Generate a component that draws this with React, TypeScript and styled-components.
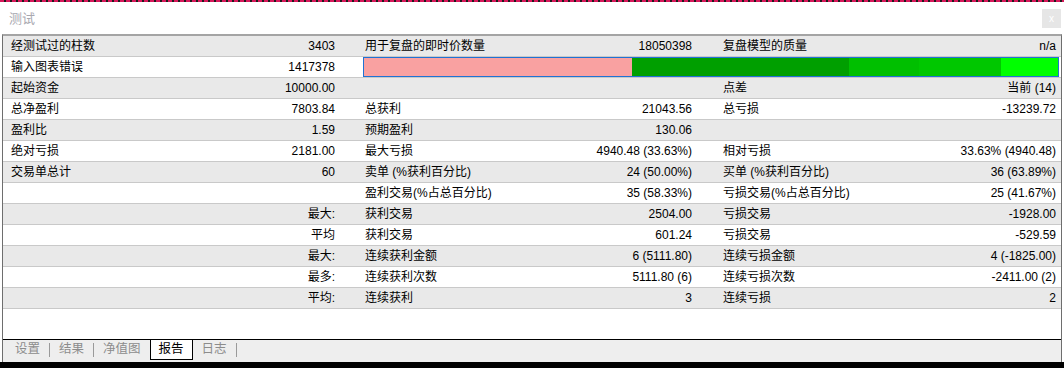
import React from 'react';
import styled, { createGlobalStyle } from 'styled-components';

type RowData = [string, string, string, string, string, string];

const rows: RowData[] = [
    ['经测试过的柱数', '3403', '用于复盘的即时价数量', '18050398', '复盘模型的质量', 'n/a'],
    ['输入图表错误', '1417378', '', '', '', ''],
    ['起始资金', '10000.00', '', '', '点差', '当前 (14)'],
    ['总净盈利', '7803.84', '总获利', '21043.56', '总亏损', '-13239.72'],
    ['盈利比', '1.59', '预期盈利', '130.06', '', ''],
    ['绝对亏损', '2181.00', '最大亏损', '4940.48 (33.63%)', '相对亏损', '33.63% (4940.48)'],
    ['交易单总计', '60', '卖单 (%获利百分比)', '24 (50.00%)', '买单 (%获利百分比)', '36 (63.89%)'],
    ['', '', '盈利交易(%占总百分比)', '35 (58.33%)', '亏损交易(%占总百分比)', '25 (41.67%)'],
    ['', '最大:', '获利交易', '2504.00', '亏损交易', '-1928.00'],
    ['', '平均', '获利交易', '601.24', '亏损交易', '-529.59'],
    ['', '最大:', '连续获利金额', '6 (5111.80)', '连续亏损金额', '4 (-1825.00)'],
    ['', '最多:', '连续获利次数', '5111.80 (6)', '连续亏损次数', '-2411.00 (2)'],
    ['', '平均:', '连续获利', '3', '连续亏损', '2'],
];

// quality bar segments, widths in px of the original bar
const quality = [
    { color: '#f9a1a1', size: 268 },
    { color: '#009f00', size: 216 },
    { color: '#00bf00', size: 70 },
    { color: '#00c700', size: 82 },
    { color: '#00ff00', size: 57 },
];

const tabs = ['设置', '结果', '净值图', '报告', '日志'];
const activeTab = 3;

const App = () => {
    return (
        <>
            <GlobalStyle />
            <Window>
                <TopStrip />
                <TitleBar>
                    <TitleText>测试</TitleText>
                    <CloseButton>x</CloseButton>
                </TitleBar>
                <Panel>
                    <Table>
                        {rows.map((r, i) => (
                            <Row key={i} $shaded={i % 2 === 0}>
                                <Label>{r[0]}</Label>
                                <Value>{r[1]}</Value>
                                <span />
                                {i === 1 ? (
                                    <QualityBar>
                                        {quality.map((q, j) => (
                                            <BarSegment key={j} $color={q.color} style={{ flexGrow: q.size }} />
                                        ))}
                                    </QualityBar>
                                ) : (
                                    <>
                                        <Label>{r[2]}</Label>
                                        <Value>{r[3]}</Value>
                                        <span />
                                        <Label>{r[4]}</Label>
                                        <Value>{r[5]}</Value>
                                    </>
                                )}
                            </Row>
                        ))}
                    </Table>
                    <Filler />
                    <TabBar>
                        {tabs.map((t, i) => (
                            <React.Fragment key={t}>
                                <Tab $active={i === activeTab}>{t}</Tab>
                                {i !== activeTab && i + 1 !== activeTab && <TabSep />}
                            </React.Fragment>
                        ))}
                    </TabBar>
                </Panel>
            </Window>
        </>
    );
};

export default App;

const GlobalStyle = createGlobalStyle`
    html, body {
        margin: 0;
        padding: 0;
        background: #000;
    }
    body {
        font-family: "Liberation Sans", "Noto Sans CJK SC", sans-serif;
        font-size: 12px;
        color: #000;
    }
    * {
        box-sizing: border-box;
    }
`;

const Window = styled.div`
    width: 1064px;
    height: 362px;
    background: #fff;
    display: flex;
    flex-direction: column;
`;

const TopStrip = styled.div`
    height: 2px;
    background: repeating-linear-gradient(90deg, #d8175a 0 4px, #1c1c1c 4px 6px);
`;

const TitleBar = styled.div`
    height: 32px;
    display: flex;
    align-items: center;
    justify-content: space-between;
    padding: 0 3px 6px 9px;
`;

const TitleText = styled.span`
    font-size: 13px;
    color: #a8a8b0;
    margin-top: 4px;
`;

const CloseButton = styled.div`
    width: 19px;
    height: 19px;
    margin-top: 6px;
    background: #e6e6e6;
    color: #fff;
    font-size: 10px;
    display: flex;
    align-items: center;
    justify-content: center;
`;

const Panel = styled.div`
    flex: 1;
    margin: 0 2px;
    border-top: 2px solid #a4a4a4;
    border-left: 1px solid #6e6e6e;
    border-right: 1px solid #6e6e6e;
    display: flex;
    flex-direction: column;
`;

const Table = styled.div`
    display: flex;
    flex-direction: column;
`;

const Row = styled.div<{ $shaded: boolean }>`
    height: 21px;
    display: grid;
    grid-template-columns: 170px 154px 30px 180px 147px 31px 180px 1fr;
    align-items: center;
    padding: 0 5px 0 8px;
    background: ${p => (p.$shaded ? '#e9e9e9' : '#fff')};
    border-bottom: 1px solid #c9c9c9;
    line-height: 20px;
    white-space: nowrap;
`;

const Label = styled.span`
    text-align: left;
`;

const Value = styled.span`
    text-align: right;
`;

const QualityBar = styled.div`
    grid-column: 4 / -1;
    align-self: stretch;
    margin: 0 -3px 0 -2px;
    border: 1px solid #1f72d4;
    display: flex;
`;

const BarSegment = styled.div<{ $color: string }>`
    flex-basis: 0;
    background: ${p => p.$color};
`;

const Filler = styled.div`
    flex: 1;
`;

const TabBar = styled.div`
    height: 23px;
    border-top: 1px solid #000;
    background: #eeeeee;
    display: flex;
    align-items: flex-start;
    padding-left: 3px;
`;

const Tab = styled.div<{ $active: boolean }>`
    height: 20px;
    line-height: 19px;
    padding: 0 ${p => (p.$active ? '8px' : '9px')};
    font-size: 12.5px;
    color: ${p => (p.$active ? '#000' : '#8c8c8c')};
    background: ${p => (p.$active ? '#fff' : 'transparent')};
    border: ${p => (p.$active ? '1px solid #000' : 'none')};
    border-top: none;
`;

const TabSep = styled.div`
    width: 1px;
    height: 14px;
    margin-top: 3px;
    background: #9a9a9a;
`;
